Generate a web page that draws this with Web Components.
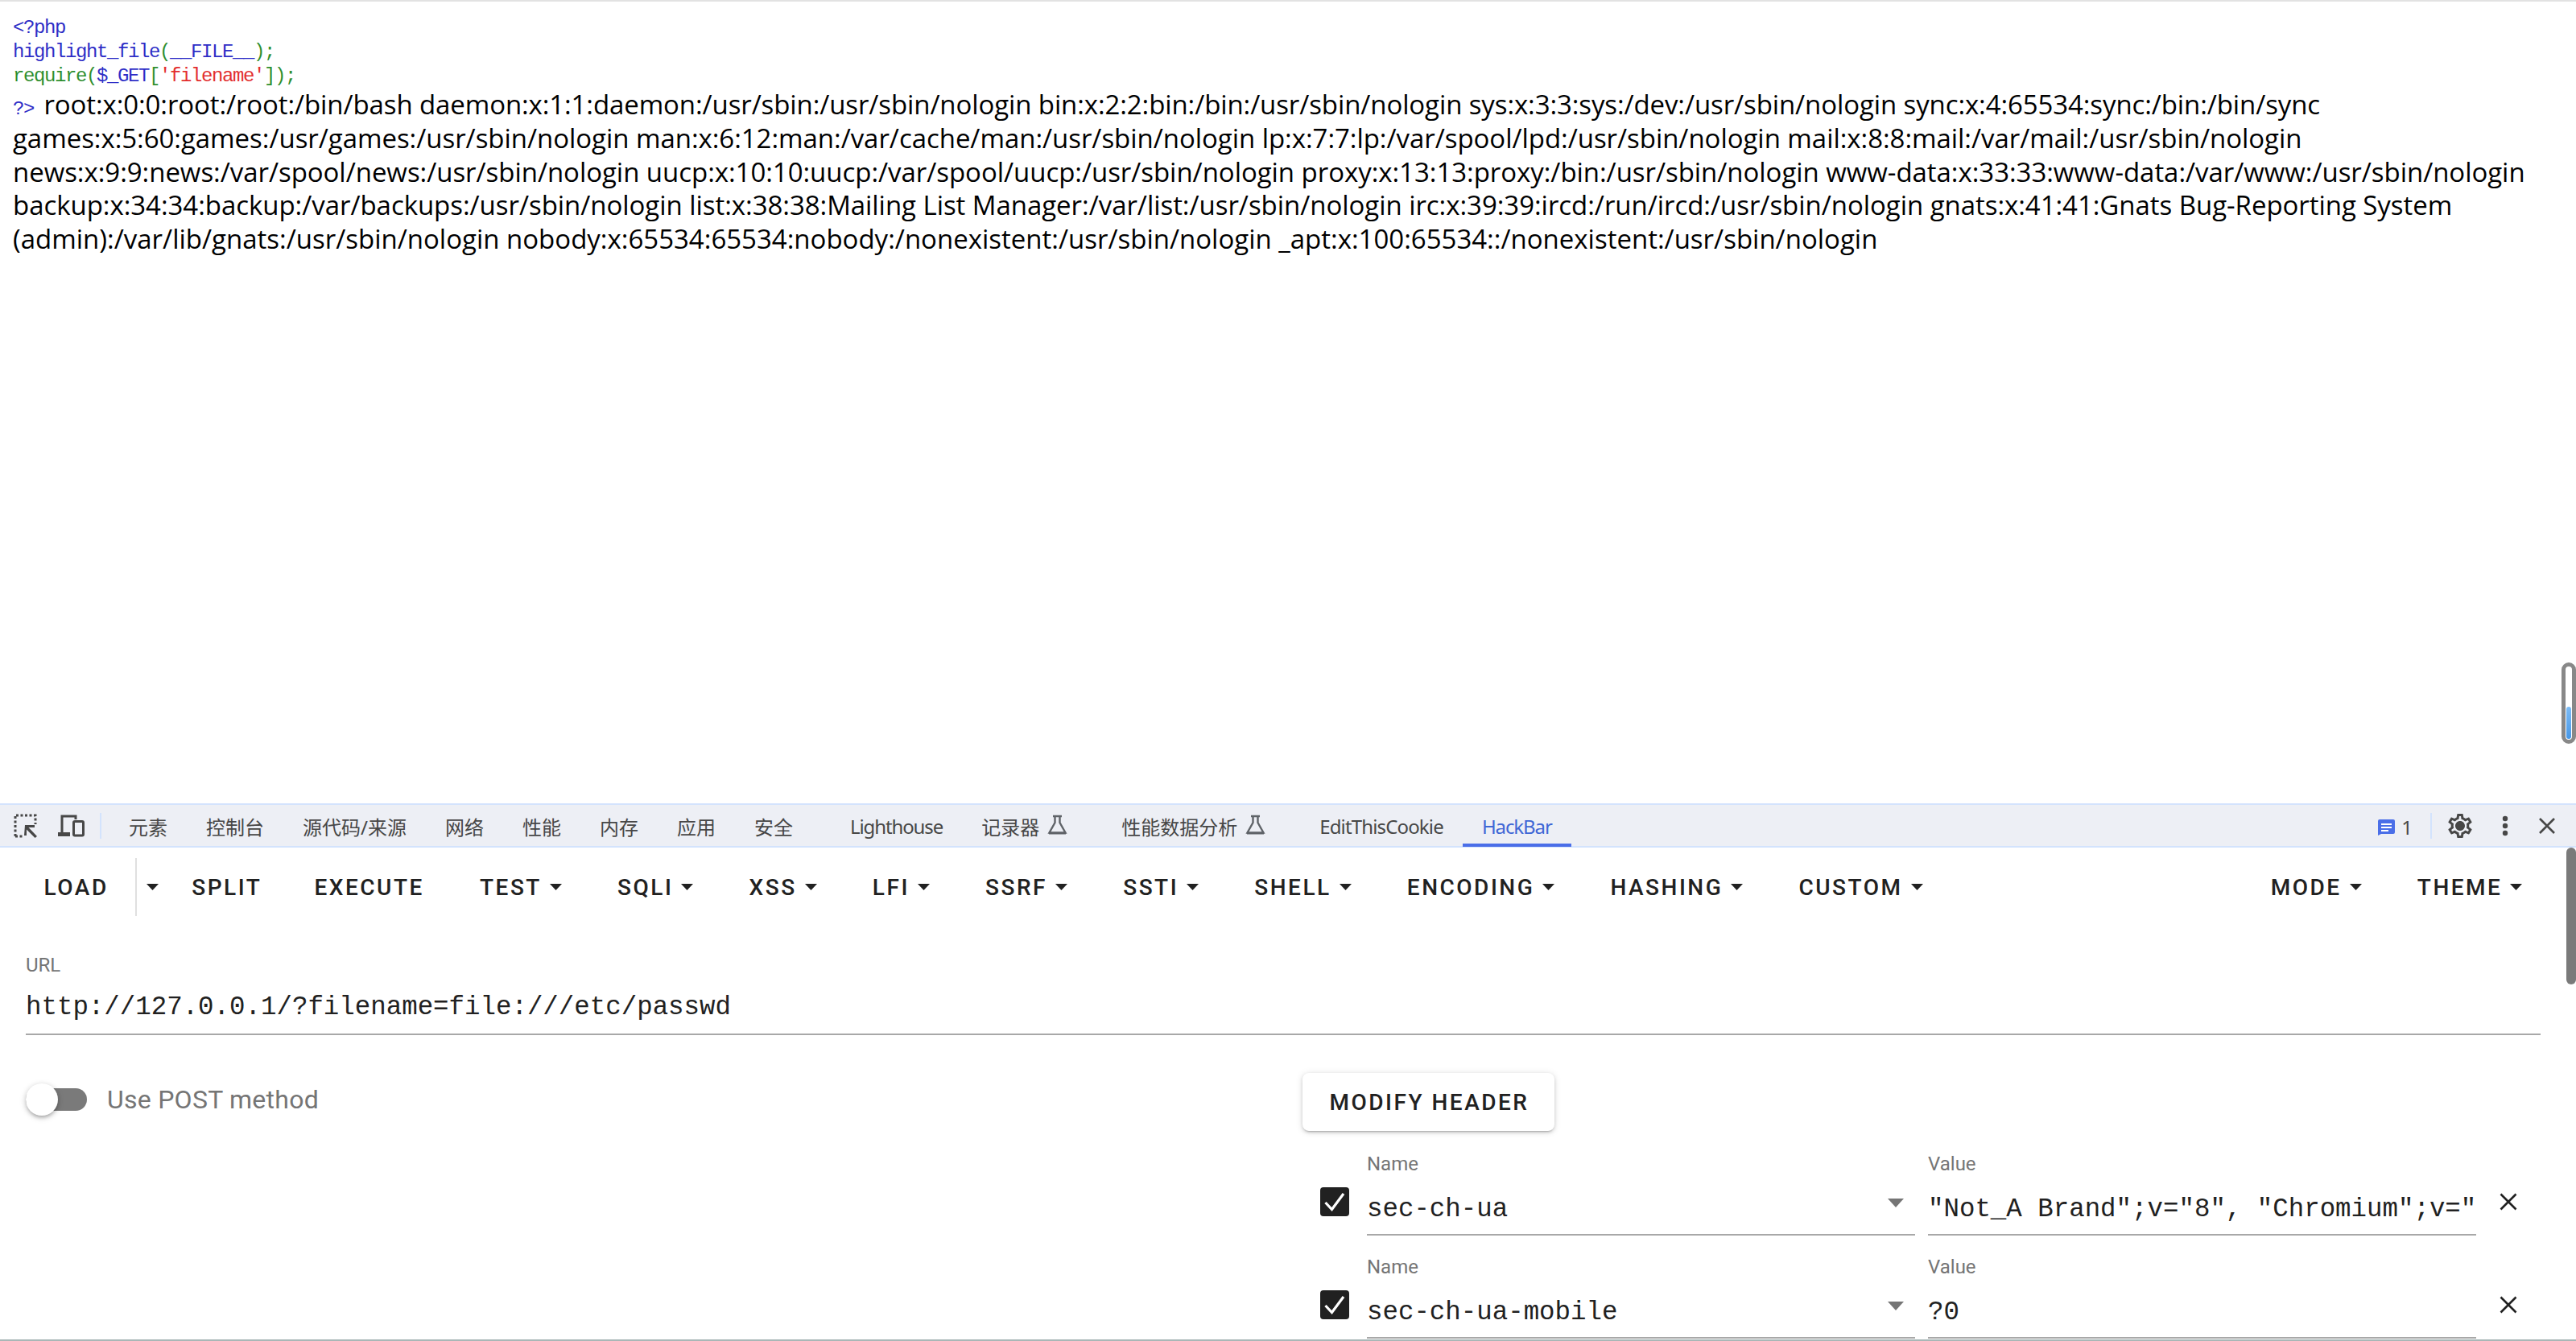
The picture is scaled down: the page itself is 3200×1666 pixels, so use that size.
<!DOCTYPE html>
<html><head><meta charset="utf-8"><title>HackBar</title>
<style>
html,body{margin:0;padding:0;height:100%;overflow:hidden;background:#fff}
body{font-family:"Roboto","Noto Sans CJK SC",sans-serif}
</style></head><body>
<hb-app></hb-app>
<script>
function def(name, css, html){
  customElements.define(name, class extends HTMLElement{
    connectedCallback(){
      if(this.shadowRoot) return;
      const r=this.attachShadow({mode:'open'});
      const h=typeof html==='function'?html(this):html;
      r.innerHTML='<style>'+css+'</style>'+h;
    }
  });
}
const CARET='<svg width="15" height="8" viewBox="0 0 15 8"><path d="M0 0h15L7.5 8z" fill="currentColor"/></svg>';
const FLASK='<svg width="25" height="26" viewBox="0 0 25 26"><path d="M7 2h11M9.500 2v8L2.500 22.500h20L15.500 10V2" fill="none" stroke="#5f6368" stroke-width="2.400"/><path d="M2 22.500h21v2H2z" fill="#5f6368"/></svg>';

def('php-output',`
:host{display:block;height:998px;box-sizing:border-box;border-top:2px solid #e2e2e2;padding:18px 0 0 16px;position:relative;color:#000;overflow:hidden}
.code{font:24px/30px "Liberation Mono",monospace;letter-spacing:-1.4px;white-space:pre;color:#0000BB;opacity:.82}
.g{color:#007700}.r{color:#DD0000}
.out{font:33px/41.75px "Open Sans",sans-serif;letter-spacing:-.05px;white-space:nowrap;margin-top:-1px}
.out .code{line-height:1;margin-right:4px}
.out div{height:41.750px}
.l1{letter-spacing:-.11px}.l5{letter-spacing:-.01px}
`,`<div class="code">&lt;?php
highlight_file<span class="g">(</span>__FILE__<span class="g">);</span>
<span class="g">require(</span>$_GET<span class="g">[</span><span class="r">'filename'</span><span class="g">]);</span></div>
<div class="out">
<div class="l1"><span class="code">?&gt;</span> root:x:0:0:root:/root:/bin/bash daemon:x:1:1:daemon:/usr/sbin:/usr/sbin/nologin bin:x:2:2:bin:/bin:/usr/sbin/nologin sys:x:3:3:sys:/dev:/usr/sbin/nologin sync:x:4:65534:sync:/bin:/bin/sync</div>
<div>games:x:5:60:games:/usr/games:/usr/sbin/nologin man:x:6:12:man:/var/cache/man:/usr/sbin/nologin lp:x:7:7:lp:/var/spool/lpd:/usr/sbin/nologin mail:x:8:8:mail:/var/mail:/usr/sbin/nologin</div>
<div>news:x:9:9:news:/var/spool/news:/usr/sbin/nologin uucp:x:10:10:uucp:/var/spool/uucp:/usr/sbin/nologin proxy:x:13:13:proxy:/bin:/usr/sbin/nologin www-data:x:33:33:www-data:/var/www:/usr/sbin/nologin</div>
<div>backup:x:34:34:backup:/var/backups:/usr/sbin/nologin list:x:38:38:Mailing List Manager:/var/list:/usr/sbin/nologin irc:x:39:39:ircd:/run/ircd:/usr/sbin/nologin gnats:x:41:41:Gnats Bug-Reporting System</div>
<div class="l5">(admin):/var/lib/gnats:/usr/sbin/nologin nobody:x:65534:65534:nobody:/nonexistent:/usr/sbin/nologin _apt:x:100:65534::/nonexistent:/usr/sbin/nologin</div>
</div><slot></slot>`);

def('mini-scroll',`
:host{display:block;position:absolute;left:3182px;top:823px;width:18px;height:101px;box-sizing:border-box;border:5px solid #888;border-radius:9px}
i{display:block;position:absolute;left:1px;right:1px;bottom:1px;height:40px;border-radius:3px;background:linear-gradient(#7dbcf6,#4797e6)}
`,`<i></i>`);

def('dt-tab',`
:host{display:flex;align-items:center;height:100%;box-sizing:border-box;padding:1px 24px 0;gap:10px;font:24px "Noto Sans","Noto Sans CJK SC",sans-serif;color:#474747;white-space:nowrap;position:relative}
:host([latin]){letter-spacing:-1.1px}
:host([wide]){letter-spacing:-.85px}
:host([active]){color:#3f67d6}
:host([active])::after{content:"";position:absolute;left:0;right:0;bottom:-1px;height:4px;background:#4a6ee8}
:host([gap]){margin-left:23px}
:host([flask]){padding-right:43px}
svg{margin-top:-3px}
`,h=>`<slot></slot>${h.hasAttribute('flask')?FLASK:''}`);

def('dt-bar',`
:host{display:flex;align-items:center;height:55px;box-sizing:border-box;background:#edeff5;border-top:2px solid #d3e3fd;border-bottom:2px solid #d3e3fd;font-family:"Noto Sans","Noto Sans CJK SC",sans-serif}
.sep{width:2px;height:32px;background:#d3e3fd}
.ic{display:flex;align-items:center;justify-content:center}
.tabs{display:flex;height:100%}
.sp{flex:1}
.cnt{display:flex;align-items:center;gap:8px;font:24px "Noto Sans",sans-serif;color:#474747;margin-right:22px;padding-top:4px}
`,`<div class="ic" style="margin-left:16px;width:32px"><svg width="32" height="32" viewBox="0 0 32 32"><path d="M4 3h24v11M3 4v25M3 29h11" fill="none" stroke="#474747" stroke-width="3" stroke-dasharray="3 2.500"/><path d="M15 15h12v3h-7.500L30 29l-2.500 2L17 20.500V28h-3z" fill="#474747"/></svg></div>
<div class="ic" style="margin-left:22px;width:36px"><svg width="36" height="32" viewBox="0 0 36 32"><path d="M7 25V4h17v4" fill="none" stroke="#474747" stroke-width="3"/><path d="M2 24h15v5H2z" fill="#474747"/><rect x="21.500" y="10.500" width="12" height="17.500" rx="1.500" fill="none" stroke="#474747" stroke-width="3"/></svg></div>
<div class="sep" style="margin-left:18px"></div>
<div class="tabs" style="margin-left:10px"><slot></slot></div>
<div class="sp"></div>
<div class="cnt"><svg width="21" height="20" viewBox="0 0 21 20"><path d="M2 0h17a2 2 0 0 1 2 2v14a2 2 0 0 1-2 2H4l-4 2V2a2 2 0 0 1 2-2z" fill="#4a6ee8"/><path d="M4 5h13v2H4zM4 9h13v2H4zM4 13h9v2H4z" fill="#fff"/></svg><span>1</span></div>
<div class="sep"></div>
<div class="ic" style="margin-left:17px;width:36px"><svg width="36" height="36" viewBox="0 0 24 24"><path fill="#474747" d="M19.430 12.980c.04-.32.07-.64.07-.98s-.03-.66-.07-.98l2.110-1.650c.19-.15.240-.42.120-.64l-2-3.460c-.12-.22-.39-.3-.61-.22l-2.490 1c-.52-.4-1.080-.73-1.690-.98l-.38-2.650A.488.488 0 0 0 14 2h-4c-.25 0-.46.18-.49.420l-.38 2.650c-.61.25-1.170.59-1.690.98l-2.490-1a.566.566 0 0 0-.18-.03c-.17 0-.34.09-.43.25l-2 3.460c-.13.22-.07.49.12.64l2.110 1.650c-.04.32-.07.65-.07.98s.03.660.07.98l-2.110 1.650c-.19.15-.24.42-.12.64l2 3.460c.12.22.39.3.61.22l2.490-1c.52.4 1.080.73 1.690.98l.38 2.650c.03.24.24.42.49.42h4c.25 0 .46-.18.49-.42l.38-2.650c.61-.25 1.170-.59 1.690-.98l2.490 1c.06.02.12.03.18.03.17 0 .34-.09.43-.25l2-3.460c.12-.22.07-.49-.12-.64l-2.110-1.650zm-1.980-1.710c.04.31.05.52.05.73 0 .21-.02.43-.05.73l-.14 1.130.89.700 1.080.84-.7 1.210-1.270-.51-1.040-.42-.9.680c-.43.32-.84.56-1.250.73l-1.060.43-.16 1.130-.2 1.350h-1.400l-.19-1.350-.16-1.130-1.060-.43c-.43-.18-.83-.41-1.230-.71l-.91-.7-1.060.43-1.270.51-.7-1.210 1.080-.84.890-.7-.14-1.130c-.03-.31-.05-.54-.05-.74s.02-.43.05-.73l.14-1.130-.89-.7-1.080-.84.7-1.210 1.270.51 1.040.42.9-.68c.43-.32.84-.56 1.250-.73l1.060-.43.16-1.130.2-1.350h1.390l.19 1.350.16 1.130 1.060.43c.43.18.83.41 1.230.71l.91.7 1.060-.43 1.270-.51.7 1.210-1.070.85-.89.7.14 1.130zM12 8c-2.210 0-4 1.790-4 4s1.790 4 4 4 4-1.790 4-4-1.790-4-4-4z"/><circle cx="12" cy="12" r="3" fill="#474747"/></svg></div>
<div class="ic" style="margin-left:34px;width:8px"><svg width="8" height="26" viewBox="0 0 8 26"><circle cx="4" cy="4" r="3.200" fill="#474747"/><circle cx="4" cy="13" r="3.200" fill="#474747"/><circle cx="4" cy="22" r="3.200" fill="#474747"/></svg></div>
<div class="ic" style="margin-left:38px;margin-right:26px;width:20px"><svg width="20" height="20" viewBox="0 0 20 20"><path d="M1 1l18 18M19 1L1 19" stroke="#474747" stroke-width="2.600"/></svg></div>`);

def('hb-btn',`
:host{display:flex;align-items:center;height:72px;padding:0 34.600px;font:500 28px "Roboto",sans-serif;letter-spacing:2.500px;color:#212121;white-space:nowrap;gap:10px}
:host([split]){padding-right:33px}
:host([tight]){margin-right:-4px}
`,h=>`<slot></slot>${h.hasAttribute('caret')?CARET:''}`);

def('hb-caret',`
:host{display:flex;align-items:center;height:72px;box-sizing:border-box;width:36px;padding-left:12px;color:#212121;border-left:2px solid #e0e0e0}
`,CARET);

def('hb-toolbar',`
:host{display:flex;align-items:center;padding:13px 20px 11px 20px;color:#212121}
`,`<slot></slot>`);

def('hb-spacer',`:host{display:block;flex:1}`,'');

def('hb-field',`
:host{display:block;flex:1;min-width:0;box-sizing:border-box;border-bottom:2px solid #a8a8a8;overflow:hidden}
.l{font:24px/26px "Roboto",sans-serif;color:#757575;height:26px}
.v{display:flex;align-items:center;height:var(--vh,48px);padding-top:var(--vt,20px);box-sizing:content-box}
.t{flex:1;min-width:0;overflow:hidden;white-space:pre;font:32.450px/40px "Liberation Mono",monospace;color:#212121}
svg{margin:-18px 14px 0 0;color:#757575}
`,h=>`<div class="l">${h.getAttribute('label')}</div><div class="v"><div class="t"><slot></slot></div>${h.hasAttribute('dropdown')?'<svg width="20" height="11" viewBox="0 0 20 11"><path d="M0 0h20L10 11z" fill="currentColor"/></svg>':''}</div>`);

def('hb-switch',`
:host{display:flex;align-items:center;height:40px;font:32px "Roboto",sans-serif;letter-spacing:.25px;color:#757575;gap:25px}
.t{width:76px;height:28px;border-radius:14px;background:#7a7a7a;position:relative}
.k{position:absolute;left:0;top:-6px;width:40px;height:40px;border-radius:50%;background:#fff;box-shadow:0 4px 4px -2px rgba(0,0,0,.2),0 2px 6px rgba(0,0,0,.14),0 2px 10px rgba(0,0,0,.12)}
`,`<div class="t"><div class="k"></div></div><slot></slot>`);

def('hb-raised',`
:host{display:inline-flex;align-items:center;justify-content:center;box-sizing:border-box;padding-left:2px;height:72px;width:313px;border-radius:8px;background:#fff;font:500 28px "Roboto",sans-serif;letter-spacing:2.500px;color:#212121;box-shadow:0 3px 2px -2px rgba(0,0,0,.2),0 2px 4px rgba(0,0,0,.14),0 1px 10px rgba(0,0,0,.12)}
`,`<slot></slot>`);

def('hb-check',`
:host{display:block;width:36px;height:36px;border-radius:4px;background:#212121}
svg{display:block}
`,`<svg width="36" height="36" viewBox="0 0 36 36"><path d="M6.500 19l8 8.500L29 8" fill="none" stroke="#fff" stroke-width="3.200"/></svg>`);

def('hb-header',`
:host{display:flex;height:102px}
.c{flex:none;width:80px;box-sizing:border-box;padding:42px 0 0 22px}
.f{flex:1;display:flex;gap:16px;min-width:0}
.x{flex:none;width:80px;box-sizing:border-box;padding-top:49px;display:flex;justify-content:center}
`,h=>`<div class="c"><hb-check></hb-check></div>
<div class="f"><hb-field label="Name" dropdown>${h.getAttribute('name')}</hb-field>
<hb-field label="Value">${h.getAttribute('value')}</hb-field></div>
<div class="x"><svg width="22" height="22" viewBox="0 0 22 22"><path d="M1.500 1.500l19 19M20.500 1.500l-19 19" stroke="#212121" stroke-width="2.600"/></svg></div>`);

def('hb-panel',`
:host{display:flex;flex:1;min-height:0;overflow:hidden;border-bottom:2px solid #a9b7b7}
.main{flex:1;min-width:0}
.thumb{width:12px;height:170px;background:#7a7a7a;border-radius:6px}
.url{padding:37px 32px 0 32px;--vh:64px;--vt:8px}
.opts{display:grid;grid-template-columns:1586px 1fr;padding:47px 0 0 32px}
.sw{padding-top:13px}
.right{display:flex;flex-direction:column;gap:28px}
.rows{display:flex;flex-direction:column;gap:26px;width:1538px}
`,`<div class="main"><slot name="toolbar"></slot>
<div class="url"><hb-field label="URL">http://127.0.0.1/?filename=file:///etc/passwd</hb-field></div>
<div class="opts"><div class="sw"><hb-switch>Use POST method</hb-switch></div>
<div class="right"><div><hb-raised>MODIFY HEADER</hb-raised></div>
<div class="rows">
<hb-header name="sec-ch-ua" value='&quot;Not_A Brand&quot;;v=&quot;8&quot;, &quot;Chromium&quot;;v=&quot;'></hb-header>
<hb-header name="sec-ch-ua-mobile" value="?0"></hb-header>
</div></div></div></div>
<div class="thumb"></div>`);

def('hb-app',`
:host{display:flex;flex-direction:column;width:3200px;height:1666px;overflow:hidden;position:relative}
`,`<php-output></php-output><mini-scroll></mini-scroll>
<dt-bar>
<dt-tab>元素</dt-tab><dt-tab>控制台</dt-tab><dt-tab>源代码/来源</dt-tab><dt-tab>网络</dt-tab><dt-tab>性能</dt-tab><dt-tab>内存</dt-tab><dt-tab>应用</dt-tab><dt-tab>安全</dt-tab>
<dt-tab gap latin>Lighthouse</dt-tab><dt-tab flask>记录器</dt-tab><dt-tab flask>性能数据分析</dt-tab><dt-tab latin wide>EditThisCookie</dt-tab><dt-tab active latin>HackBar</dt-tab>
</dt-bar>
<hb-panel><hb-toolbar slot="toolbar">
<hb-btn split>LOAD</hb-btn><hb-caret></hb-caret><hb-btn tight>SPLIT</hb-btn><hb-btn>EXECUTE</hb-btn><hb-btn caret>TEST</hb-btn><hb-btn caret>SQLI</hb-btn><hb-btn caret>XSS</hb-btn><hb-btn caret>LFI</hb-btn><hb-btn caret>SSRF</hb-btn><hb-btn caret>SSTI</hb-btn><hb-btn caret>SHELL</hb-btn><hb-btn caret>ENCODING</hb-btn><hb-btn caret>HASHING</hb-btn><hb-btn caret>CUSTOM</hb-btn><hb-spacer></hb-spacer><hb-btn caret>MODE</hb-btn><hb-btn caret>THEME</hb-btn>
</hb-toolbar></hb-panel>`);
</script>
</body></html>
